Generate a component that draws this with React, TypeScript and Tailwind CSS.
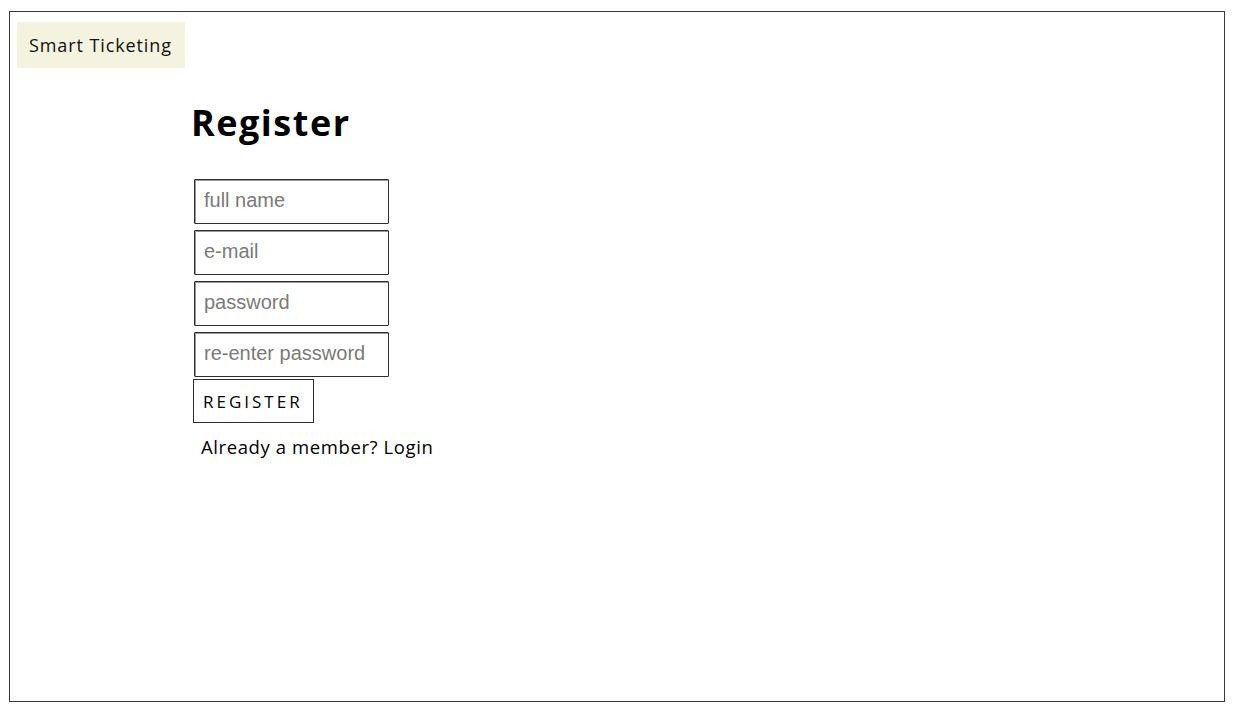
import React from 'react'

const sketch = "font-['Open_Sans','Noto_Sans',sans-serif]"

const fields = ['full name', 'e-mail', 'password', 're-enter password']

const Field = ({ label }: { label: string }) => (
  <div className="w-[195px] h-[45px] border-[1.5px] border-[#2e2e2e] rounded-[1px] flex items-center px-[9px] shadow-[inset_1px_1px_0_#999]">
    <span className="font-['Liberation_Sans',Arial,sans-serif] text-[20px] text-[#7a7a7a] leading-none -mt-[3px]">{label}</span>
  </div>
)

const App = () => {
  return (
    <main className={`w-[1234px] h-[711px] bg-white overflow-hidden pt-[11px] pl-[9px] ${sketch}`}>
      <div className="w-[1216px] h-[691px] border-[1.5px] border-[#3a3a3a] relative">
        <div className="absolute left-[7px] top-[10px] w-[168px] h-[46px] bg-[#f3f3df] flex items-center pl-[12px]">
          <span className="text-[18px] text-[#111] leading-none tracking-[0.9px]">Smart Ticketing</span>
        </div>

        <div className="pl-[181px] pt-[93px] flex flex-col">
          <h1 className="text-[36px] font-bold text-black leading-none tracking-[1.5px]">Register</h1>

          <div className="mt-[38px] ml-[3px] flex flex-col gap-[6px]">
            {fields.map(f => <Field key={f} label={f} />)}
          </div>

          <button className="mt-[2px] ml-[2px] w-[121px] h-[44px] border-[1.5px] border-[#2e2e2e] text-left pl-[9px] text-[17px] tracking-[3px] text-black bg-white leading-none">
            REGISTER
          </button>

          <p className="mt-[15px] ml-[10px] text-[18.5px] text-black leading-none tracking-[0.6px]">Already a member? Login</p>
        </div>
      </div>
    </main>
  )
}

export default App
